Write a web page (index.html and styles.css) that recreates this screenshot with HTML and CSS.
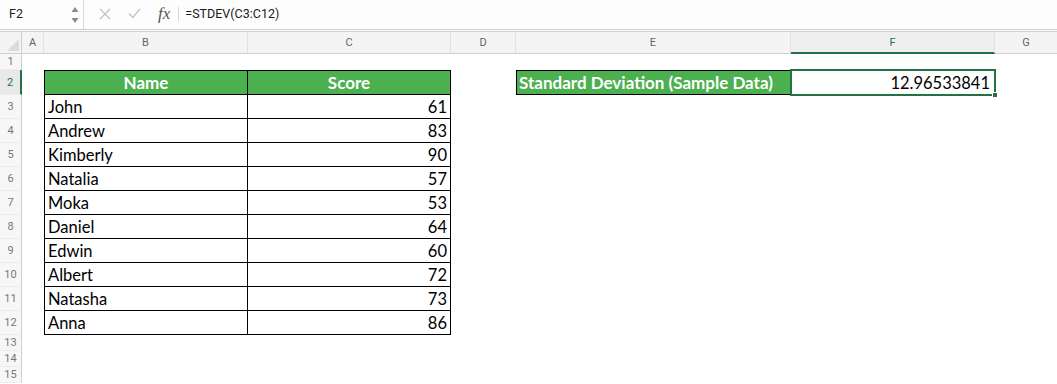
FILE: index.html
```html
<!DOCTYPE html>
<html lang="en">
<head>
	<meta charset="utf-8">
	<title>Standard Deviation</title>
	<link rel="stylesheet" href="styles.css">
</head>
<body>
	<div class="formula">
		<div class="namebox">
			<span>F2</span>
			<svg class="spin" width="8" height="18" viewBox="0 0 8 18">
				<path d="M4 1 L7.5 6 L0.5 6 Z" fill="#8a8a8a"/>
				<path d="M0.5 12 L7.5 12 L4 17 Z" fill="#8a8a8a"/>
			</svg>
		</div>
		<div class="fbtns">
			<svg width="12" height="12" viewBox="0 0 12 12">
				<path d="M1 1 L11 11 M11 1 L1 11" stroke="#c4c4c4" stroke-width="1.4" fill="none"/>
			</svg>
			<svg width="13" height="11" viewBox="0 0 13 11">
				<path d="M1 5.5 L4.8 9.5 L12 1" stroke="#c4c4c4" stroke-width="1.4" fill="none"/>
			</svg>
			<i class="fx">fx</i>
		</div>
		<div class="ftext">=STDEV(C3:C12)</div>
	</div>

	<table class="sheet">
		<colgroup>
			<col style="width: 22px">
			<col style="width: 22px">
			<col style="width: 204px">
			<col style="width: 203px">
			<col style="width: 65px">
			<col style="width: 275px">
			<col style="width: 204px">
			<col style="width: 62px">
		</colgroup>
		<tr class="colhead">
			<th class="corner"></th>
			<th>A</th>
			<th>B</th>
			<th>C</th>
			<th>D</th>
			<th>E</th>
			<th class="cur">F</th>
			<th class="last">G</th>
		</tr>
		<tr class="small">
			<th class="rh">1</th>
			<td></td><td></td><td></td><td></td><td></td><td></td><td></td>
		</tr>
		<tr class="first">
			<th class="rh cur">2</th>
			<td></td>
			<td class="hd lft">Name</td>
			<td class="hd">Score</td>
			<td></td>
			<td class="hd lft stat">Standard Deviation (Sample Data)</td>
			<td class="result">12.96533841</td>
			<td></td>
		</tr>
		<tr>
			<th class="rh">3</th>
			<td></td><td class="name lft">John</td><td class="num">61</td><td></td><td></td><td></td><td></td>
		</tr>
		<tr>
			<th class="rh">4</th>
			<td></td><td class="name lft">Andrew</td><td class="num">83</td><td></td><td></td><td></td><td></td>
		</tr>
		<tr>
			<th class="rh">5</th>
			<td></td><td class="name lft">Kimberly</td><td class="num">90</td><td></td><td></td><td></td><td></td>
		</tr>
		<tr>
			<th class="rh">6</th>
			<td></td><td class="name lft">Natalia</td><td class="num">57</td><td></td><td></td><td></td><td></td>
		</tr>
		<tr>
			<th class="rh">7</th>
			<td></td><td class="name lft">Moka</td><td class="num">53</td><td></td><td></td><td></td><td></td>
		</tr>
		<tr>
			<th class="rh">8</th>
			<td></td><td class="name lft">Daniel</td><td class="num">64</td><td></td><td></td><td></td><td></td>
		</tr>
		<tr>
			<th class="rh">9</th>
			<td></td><td class="name lft">Edwin</td><td class="num">60</td><td></td><td></td><td></td><td></td>
		</tr>
		<tr>
			<th class="rh">10</th>
			<td></td><td class="name lft">Albert</td><td class="num">72</td><td></td><td></td><td></td><td></td>
		</tr>
		<tr>
			<th class="rh">11</th>
			<td></td><td class="name lft">Natasha</td><td class="num">73</td><td></td><td></td><td></td><td></td>
		</tr>
		<tr>
			<th class="rh">12</th>
			<td></td><td class="name lft">Anna</td><td class="num">86</td><td></td><td></td><td></td><td></td>
		</tr>
		<tr class="small">
			<th class="rh">13</th>
			<td></td><td></td><td></td><td></td><td></td><td></td><td></td>
		</tr>
		<tr class="small">
			<th class="rh">14</th>
			<td></td><td></td><td></td><td></td><td></td><td></td><td></td>
		</tr>
		<tr class="small">
			<th class="rh">15</th>
			<td></td><td></td><td></td><td></td><td></td><td></td><td></td>
		</tr>
	</table>
</body>
</html>
```

FILE: styles.css
```css
*, *:after, *:before {
	box-sizing: border-box;
}
html, body {
	margin: 0;
	background: #fff;
	font-family: Roboto, "Liberation Sans", sans-serif;
	overflow: hidden;
}

/* formula bar */
.formula {
	display: flex;
	align-items: center;
	height: 32px;
	background: #fdfdfd;
	border-bottom: 3px double #cfcfcf;
}
.namebox {
	display: flex;
	align-items: center;
	justify-content: space-between;
	width: 84px;
	height: 100%;
	padding: 0 4px 2px 9px;
	border-right: 1px solid #dadada;
	font-size: 12.5px;
	color: #222;
}
.spin {
	margin-top: 2px;
}
.fbtns {
	display: flex;
	align-items: center;
	gap: 17px;
	height: 100%;
	padding: 0 0 2px 15px;
}
.fx {
	font-family: "Liberation Serif", serif;
	font-size: 17px;
	color: #555;
	padding-right: 8px;
	border-right: 1px solid #d6d6d6;
	line-height: 14px;
}
.ftext {
	padding: 0 0 2px 6px;
	font-size: 12.5px;
	color: #1a1a1a;
}

/* sheet */
.sheet {
	table-layout: fixed;
	border-collapse: separate;
	border-spacing: 0;
	width: 1057px;
}
.sheet td, .sheet th {
	padding: 0;
	white-space: nowrap;
	overflow: visible;
}
.colhead {
	height: 22px;
}
.colhead th {
	background: #f4f4f4;
	border-bottom: 1px solid #cfcfcf;
	border-right: 1px solid #e2e2e2;
	font-weight: normal;
	font-size: 11px;
	color: #666;
	vertical-align: middle;
}
.colhead th.last {
	border-right: none;
}
.colhead th.corner {
	position: relative;
	border-right: 1px solid #cfcfcf;
}
.colhead th.corner:after {
	content: "";
	position: absolute;
	right: 2px;
	bottom: 2px;
	border-left: 12px solid transparent;
	border-bottom: 12px solid #dcdcdc;
}
.colhead th.cur {
	background-color: #efefef;
	background-image: radial-gradient(#dedede 0.5px, transparent 0.7px);
	background-size: 6px 6px;
	border-bottom: 2px solid #217346;
	color: #217346;
}

tr {
	height: 24px;
}
tr.first {
	height: 25px;
}
tr.small {
	height: 16px;
}
.rh {
	background: #f7f7f7;
	border-right: 1px solid #cfcfcf;
	border-bottom: 1px solid #ececec;
	font-weight: normal;
	font-size: 11px;
	color: #777;
	text-align: center;
}
.sheet .rh.cur {
	background: #e9e9e9;
	border-right: 2px solid #217346;
	color: #217346;
}

/* data cells */
.sheet .hd, .sheet .name, .sheet .num, .sheet .result {
	font-family: Lato, "Open Sans", sans-serif;
	font-size: 16.5px;
	color: #000;
	vertical-align: middle;
}
.sheet .hd {
	background: #4caf50;
	color: #fff;
	font-size: 17px;
	font-weight: bold;
	text-align: center;
	border-top: 1px solid #000;
	border-right: 1px solid #000;
	border-bottom: 1px solid #000;
}
.sheet .lft {
	border-left: 1px solid #000;
}
.sheet .hd.stat {
	text-align: left;
	padding-left: 2px;
	border-right: none;
}
.sheet .name {
	padding-left: 3px;
	border-right: 1px solid #000;
	border-bottom: 1px solid #000;
}
.sheet .num {
	text-align: right;
	padding-right: 3px;
	border-right: 1px solid #000;
	border-bottom: 1px solid #000;
}
.sheet .result {
	position: relative;
	text-align: right;
	padding-right: 5px;
	outline: 2px solid #217346;
	outline-offset: -1px;
}
.sheet .result:after {
	content: "";
	position: absolute;
	right: -3px;
	bottom: -3px;
	width: 6px;
	height: 6px;
	background: #217346;
	border: 1px solid #fff;
}
```
